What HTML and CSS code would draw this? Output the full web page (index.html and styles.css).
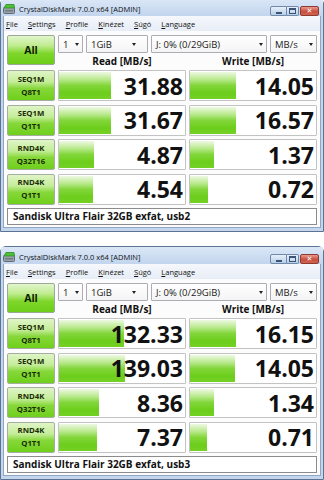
FILE: index.html
```html
<!DOCTYPE html>
<html>
<head>
<meta charset="utf-8">
<link rel="stylesheet" href="styles.css">
</head>
<body>
<div class="screen">
  <div class="window w1">
    <div class="titlebar">
      <svg class="appicon" width="12" height="10" viewBox="0 0 12 10"><rect x="0.5" y="3.5" width="11" height="6" rx="1" fill="#9aa3ab" stroke="#5f6a73"/><path d="M1 4 L3 0.5 H11 L11.5 4 Z" fill="#4fbf3a" stroke="#2f8a22" stroke-width="0.8"/><rect x="2" y="6" width="8" height="1.5" fill="#6f7a83"/></svg>
      <span class="title">CrystalDiskMark 7.0.0 x64 [ADMIN]</span>
      <div class="caption">
        <span class="cbtn min"><i></i></span><span class="cbtn max"><i></i></span><span class="cbtn close">✕</span>
      </div>
    </div>
    <div class="client">
      <div class="menubar">
        <span><u>F</u>ile</span><span><u>S</u>ettings</span><span><u>P</u>rofile</span><span><u>K</u>inézet</span><span><u>S</u>úgó</span><span><u>L</u>anguage</span>
      </div>
      <div class="panel">
        <div class="allbtn">All</div>
        <div class="combos">
          <div class="combo c-count"><span>1</span><i class="arrow"></i></div>
          <div class="combo c-size"><span>1GiB</span><i class="arrow"></i></div>
          <div class="combo c-drive"><span>J: 0% (0/29GiB)</span><i class="arrow"></i></div>
          <div class="combo c-unit"><span>MB/s</span><i class="arrow"></i></div>
        </div>
        <div class="hdr">Read [MB/s]</div>
        <div class="hdr">Write [MB/s]</div>
        <div class="rows">
          <div class="label">SEQ1M<br>Q8T1</div>
          <div class="cell"><div class="bar" style="width:52px"></div><span class="num">31.88</span></div>
          <div class="cell"><div class="bar" style="width:46px"></div><span class="num">14.05</span></div>
          <div class="label">SEQ1M<br>Q1T1</div>
          <div class="cell"><div class="bar" style="width:52px"></div><span class="num">31.67</span></div>
          <div class="cell"><div class="bar" style="width:46px"></div><span class="num">16.57</span></div>
          <div class="label">RND4K<br>Q32T16</div>
          <div class="cell"><div class="bar" style="width:35px"></div><span class="num">4.87</span></div>
          <div class="cell"><div class="bar" style="width:24px"></div><span class="num">1.37</span></div>
          <div class="label">RND4K<br>Q1T1</div>
          <div class="cell"><div class="bar" style="width:34px"></div><span class="num">4.54</span></div>
          <div class="cell"><div class="bar" style="width:18px"></div><span class="num">0.72</span></div>
        </div>
        <div class="status">Sandisk Ultra Flair 32GB exfat, usb2</div>
      </div>
    </div>
  </div>

  <div class="window w2">
    <div class="titlebar">
      <svg class="appicon" width="12" height="10" viewBox="0 0 12 10"><rect x="0.5" y="3.5" width="11" height="6" rx="1" fill="#9aa3ab" stroke="#5f6a73"/><path d="M1 4 L3 0.5 H11 L11.5 4 Z" fill="#4fbf3a" stroke="#2f8a22" stroke-width="0.8"/><rect x="2" y="6" width="8" height="1.5" fill="#6f7a83"/></svg>
      <span class="title">CrystalDiskMark 7.0.0 x64 [ADMIN]</span>
      <div class="caption">
        <span class="cbtn min"><i></i></span><span class="cbtn max"><i></i></span><span class="cbtn close">✕</span>
      </div>
    </div>
    <div class="client">
      <div class="menubar">
        <span><u>F</u>ile</span><span><u>S</u>ettings</span><span><u>P</u>rofile</span><span><u>K</u>inézet</span><span><u>S</u>úgó</span><span><u>L</u>anguage</span>
      </div>
      <div class="panel">
        <div class="allbtn">All</div>
        <div class="combos">
          <div class="combo c-count"><span>1</span><i class="arrow"></i></div>
          <div class="combo c-size"><span>1GiB</span><i class="arrow"></i></div>
          <div class="combo c-drive"><span>J: 0% (0/29GiB)</span><i class="arrow"></i></div>
          <div class="combo c-unit"><span>MB/s</span><i class="arrow"></i></div>
        </div>
        <div class="hdr">Read [MB/s]</div>
        <div class="hdr">Write [MB/s]</div>
        <div class="rows">
          <div class="label">SEQ1M<br>Q8T1</div>
          <div class="cell"><div class="bar" style="width:65px"></div><span class="num">132.33</span></div>
          <div class="cell"><div class="bar" style="width:46px"></div><span class="num">16.15</span></div>
          <div class="label">SEQ1M<br>Q1T1</div>
          <div class="cell"><div class="bar" style="width:66px"></div><span class="num">139.03</span></div>
          <div class="cell"><div class="bar" style="width:45px"></div><span class="num">14.05</span></div>
          <div class="label">RND4K<br>Q32T16</div>
          <div class="cell"><div class="bar" style="width:40px"></div><span class="num">8.36</span></div>
          <div class="cell"><div class="bar" style="width:24px"></div><span class="num">1.34</span></div>
          <div class="label">RND4K<br>Q1T1</div>
          <div class="cell"><div class="bar" style="width:38px"></div><span class="num">7.37</span></div>
          <div class="cell"><div class="bar" style="width:17px"></div><span class="num">0.71</span></div>
        </div>
        <div class="status">Sandisk Ultra Flair 32GB exfat, usb3</div>
      </div>
    </div>
  </div>
</div>
</body>
</html>
```

FILE: styles.css
```css
html, body {
  margin: 0;
  padding: 0;
  background: #ffffff;
}
body {
  width: 324px;
  height: 480px;
  overflow: hidden;
  font-family: "Open Sans", "DejaVu Sans", sans-serif;
  color: #000;
}
.screen {
  display: flex;
  flex-direction: column;
}
.window {
  box-sizing: border-box;
  width: 324px;
  height: 234px;
  border: 1px solid #5b7494;
  border-radius: 6px 6px 0 0;
  background: #c3d6ee;
  padding: 0 2px 3px;
  display: flex;
  flex-direction: column;
}
.w1 { margin-top: -2px; }
.w2 { margin-top: 14px; }

.titlebar {
  height: 16px;
  box-sizing: border-box;
  padding-top: 3px;
  display: flex;
  align-items: center;
  background: linear-gradient(#dbe7f6, #c3d6ee);
  margin: 0 -2px;
  padding-left: 2px;
  padding-right: 2px;
}
.appicon {
  flex: none;
  margin-right: 4px;
}
.title {
  font-size: 7.5px;
  line-height: 10px;
  color: #111;
  white-space: nowrap;
}
.caption {
  margin-left: auto;
  display: flex;
  align-self: flex-start;
  margin-top: 4px;
  margin-right: 2px;
}
.cbtn {
  box-sizing: border-box;
  height: 10px;
  border: 1px solid #6f89ab;
  background: linear-gradient(#e7f0fa, #b9cde6);
  display: flex;
  align-items: center;
  justify-content: center;
}
.cbtn.min {
  width: 17px;
  border-radius: 2px 0 0 2px;
}
.cbtn.min i {
  width: 6px;
  height: 2px;
  background: #3b5578;
  margin-top: 3px;
}
.cbtn.max {
  width: 12px;
  border-left: none;
  border-radius: 0 2px 2px 0;
  margin-right: 1px;
}
.cbtn.max i {
  width: 5px;
  height: 3px;
  border: 1px solid #3b5578;
  border-top-width: 2px;
}
.cbtn.close {
  width: 19px;
  border-color: #8e3a33;
  border-radius: 2px;
  background: linear-gradient(#e99a8c, #c8503f 55%, #d0624c);
  color: #fff;
  font-size: 7px;
  line-height: 8px;
  font-weight: bold;
}

.client {
  flex: 1;
  display: flex;
  flex-direction: column;
  background: #fcfcfc;
  border: 1px solid #8fa6c2;
  border-top: none;
  margin-top: 1px;
}
.menubar {
  height: 15px;
  flex: none;
  display: flex;
  align-items: center;
  gap: 10px;
  padding-left: 2px;
  font-size: 7.5px;
  background: linear-gradient(#f5f8fc, #e7edf6);
  color: #111;
}
.menubar u {
  text-decoration-thickness: 0.6px;
  text-underline-offset: 1px;
}

.panel {
  flex: 1;
  display: grid;
  grid-template-columns: 48px 1fr 1fr;
  grid-template-rows: 18px 15px auto auto;
  column-gap: 3px;
  padding: 4px 3px 2px;
  align-content: start;
}
.allbtn {
  grid-row: 1 / span 2;
  grid-column: 1;
  box-sizing: border-box;
  height: 30px;
  border: 1px solid #9aa89a;
  border-radius: 2px;
  background: linear-gradient(#e2f6cc 0%, #bfeb8e 35%, #7fd62b 62%, #6ccd18 100%);
  display: flex;
  align-items: center;
  justify-content: center;
  font-size: 10.5px;
  font-weight: bold;
  color: #0d1a00;
}
.combos {
  grid-row: 1;
  grid-column: 2 / span 2;
  display: flex;
  gap: 3px;
}
.combo {
  box-sizing: border-box;
  height: 18px;
  border: 1px solid #abadb3;
  border-radius: 1px;
  background: linear-gradient(#ffffff, #f4f4f4);
  display: flex;
  align-items: center;
  padding-left: 4px;
  font-size: 9.5px;
  color: #1a1a1a;
  white-space: nowrap;
}
.arrow {
  margin-left: auto;
  width: 0;
  height: 0;
  border-left: 2.5px solid transparent;
  border-right: 2.5px solid transparent;
  border-top: 3px solid #222;
  margin-right: 3px;
}
.c-count { width: 25px; flex: none; }
.c-size { width: 62px; flex: none; }
.c-size .arrow { margin-right: 11px; }
.c-drive { flex: 1; }
.c-unit { width: 47px; flex: none; }

.hdr {
  grid-row: 2;
  align-self: end;
  text-align: center;
  font-size: 10px;
  font-weight: bold;
  line-height: 13px;
  color: #111;
}

.rows {
  grid-column: 1 / span 3;
  display: grid;
  grid-template-columns: 48px 1fr 1fr;
  grid-auto-rows: 31px;
  column-gap: 3px;
  row-gap: 3.5px;
  margin-top: 2px;
}
.label {
  box-sizing: border-box;
  border: 1px solid #a4ad9f;
  border-radius: 2px;
  background: linear-gradient(#e0f5c8 0%, #c4ec98 38%, #86d83a 60%, #6fcf1c 100%);
  display: flex;
  flex-direction: column;
  align-items: center;
  justify-content: center;
  text-align: center;
  font-size: 7.8px;
  line-height: 13px;
  font-weight: bold;
  color: #1a2d05;
}
.cell {
  box-sizing: border-box;
  border: 1px solid #c3c3c3;
  border-radius: 1px;
  background: #ffffff;
  display: grid;
  overflow: hidden;
}
.cell > * {
  grid-area: 1 / 1;
}
.bar {
  justify-self: start;
  align-self: stretch;
  margin: 1px 0;
  background: linear-gradient(#eef9e4 0%, #b8e98a 28%, #82d63a 50%, #6ccd1b 78%, #74d126 100%);
}
.num {
  justify-self: end;
  align-self: center;
  position: relative;
  padding-right: 2px;
  font-size: 23px;
  font-weight: bold;
  line-height: 28px;
  color: #111;
}

.status {
  grid-column: 1 / span 3;
  box-sizing: border-box;
  height: 17px;
  margin-top: 3.5px;
  border: 1px solid #8c8c8c;
  background: #ffffff;
  padding-left: 5px;
  font-size: 10px;
  line-height: 15px;
  font-weight: bold;
  color: #111;
  white-space: nowrap;
  overflow: hidden;
}
```
